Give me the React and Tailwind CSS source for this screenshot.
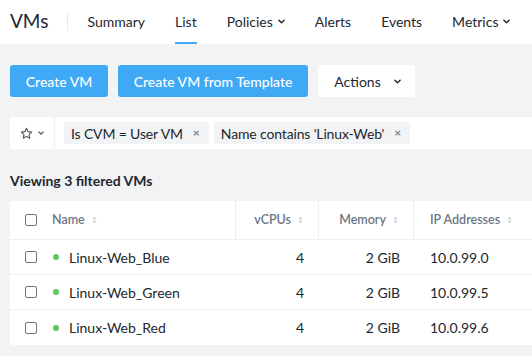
import { useState } from 'react';

const tabs = [
    { label: 'Summary' },
    { label: 'List', active: true },
    { label: 'Policies', menu: true },
    { label: 'Alerts' },
    { label: 'Events' },
    { label: 'Metrics', menu: true },
];

const vms = [
    { name: 'Linux-Web_Blue', cpus: 4, memory: '2 GiB', ip: '10.0.99.0' },
    { name: 'Linux-Web_Green', cpus: 4, memory: '2 GiB', ip: '10.0.99.5' },
    { name: 'Linux-Web_Red', cpus: 4, memory: '2 GiB', ip: '10.0.99.6' },
];

function Chevron({ className = '' }) {
    return (
        <svg viewBox="0 0 8 5" className={className} fill="none" stroke="currentColor" strokeWidth="1.6" strokeLinecap="round" strokeLinejoin="round">
            <path d="M1 1l3 3 3-3" />
        </svg>
    );
}

function SortIcon() {
    return (
        <svg viewBox="0 0 6 9" className="w-[5px] h-[8px] ml-[7px] text-[#c9ced4]" fill="currentColor">
            <path d="M3 0.5L5.5 3.5H0.5z" />
            <path d="M3 8.5L5.5 5.5H0.5z" />
        </svg>
    );
}

function Checkbox() {
    return <span className="block w-[12px] h-[12px] rounded-[2px] border border-[#6b7480] bg-white" />;
}

function Chip({ children }) {
    return (
        <div className="flex items-center h-[22px] pl-[7px] pr-[9px] bg-[#f2f3f5] rounded-[2px] text-[14px] text-[#22272e]">
            <span className="tracking-[-0.15px]">{children}</span>
            <span className="ml-[10px] text-[12px] text-[#7a838c] font-bold leading-none">×</span>
        </div>
    );
}

export default function App() {
    const [selected] = useState([]);

    return (
        <div className="w-[532px] h-[356px] overflow-hidden bg-[#f2f3f5] text-[#22272e]" style={{ fontFamily: 'Lato, "Open Sans", sans-serif' }}>
            <nav className="h-[44px] bg-white flex items-stretch pl-[10px]">
                <div className="flex items-center text-[19px] text-[#22272e] pb-[2px]">VMs</div>
                <div className="flex items-center ml-[19px] mr-[19px]">
                    <div className="w-px h-[18px] bg-[#e6e8eb]" />
                </div>
                <div className="flex items-stretch gap-[30px]">
                    {tabs.map((t) => (
                        <div
                            key={t.label}
                            className={
                                'flex items-center text-[14px] text-[#22272e] border-b-[2px] ' +
                                (t.active ? 'border-[#3fa9f5]' : 'border-transparent')
                            }
                        >
                            {t.label}
                            {t.menu && <Chevron className="w-[7px] h-[5px] ml-[5px]" />}
                        </div>
                    ))}
                </div>
            </nav>

            <div className="px-[10px]">
                <div className="flex gap-[10px] mt-[21px]">
                    <button className="w-[98px] h-[32px] rounded-[3px] bg-[#3fa9f5] text-white text-[14px] font-medium">Create VM</button>
                    <button className="w-[190px] h-[32px] rounded-[3px] bg-[#3fa9f5] text-white text-[14px] font-medium">Create VM from Template</button>
                    <button className="w-[97px] h-[32px] rounded-[3px] bg-white text-[#22272e] text-[14px] flex items-center justify-center gap-[13px] pl-[2px]">
                        Actions
                        <Chevron className="w-[7px] h-[5px]" />
                    </button>
                </div>

                <div className="mt-[20px] h-[32px] w-[540px] bg-white rounded-l-[3px] flex items-center">
                    <div className="w-[45px] h-full border-r border-[#eceef0] flex items-center justify-center gap-[5px] text-[#4a535c]">
                        <svg viewBox="0 0 24 24" className="w-[13px] h-[13px]" fill="none" stroke="currentColor" strokeWidth="2" strokeLinejoin="round">
                            <path d="M12 2.5l2.9 6.1 6.6.8-4.9 4.6 1.3 6.6L12 17.3l-5.9 3.3 1.3-6.6-4.9-4.6 6.6-.8z" />
                        </svg>
                        <Chevron className="w-[6px] h-[4px]" />
                    </div>
                    <div className="flex items-center gap-[5px] ml-[9px]">
                        <Chip>Is CVM = User VM</Chip>
                        <Chip>Name contains 'Linux-Web'</Chip>
                    </div>
                </div>

                <div className="mt-[21px] text-[14px] font-bold text-[#22272e]">Viewing 3 filtered VMs</div>

                <div className="mt-[10px] w-[540px] bg-white rounded-[3px]">
                    <div className="grid grid-cols-[226px_83px_95px_1fr] h-[39px] border-b border-[#eceef0] text-[12.5px] font-semibold text-[#6b7785]">
                        <div className="flex items-center pl-[15px] border-r border-[#eceef0]">
                            <Checkbox />
                            <span className="ml-[15px]">Name</span>
                            <SortIcon />
                        </div>
                        <div className="flex items-center justify-end pr-[15px] border-r border-[#eceef0]">
                            vCPUs
                            <SortIcon />
                        </div>
                        <div className="flex items-center justify-end pr-[15px] border-r border-[#eceef0]">
                            Memory
                            <SortIcon />
                        </div>
                        <div className="flex items-center pl-[16px]">
                            IP Addresses
                            <SortIcon />
                        </div>
                    </div>
                    {vms.map((vm, i) => (
                        <div
                            key={vm.name}
                            className={
                                'grid grid-cols-[226px_83px_95px_1fr] h-[35px] text-[14px] text-[#22272e] ' +
                                (i < vms.length - 1 ? 'border-b border-[#eceef0]' : '')
                            }
                        >
                            <div className="flex items-center pl-[15px]">
                                <Checkbox />
                                <span className="ml-[16px] w-[6px] h-[6px] rounded-full bg-[#5ac85a]" />
                                <span className="ml-[10px]">{vm.name}</span>
                            </div>
                            <div className="flex items-center justify-end pr-[15px]">{vm.cpus}</div>
                            <div className="flex items-center justify-end pr-[14px]">{vm.memory}</div>
                            <div className="flex items-center pl-[16px]">{vm.ip}</div>
                        </div>
                    ))}
                </div>
            </div>
        </div>
    );
}
